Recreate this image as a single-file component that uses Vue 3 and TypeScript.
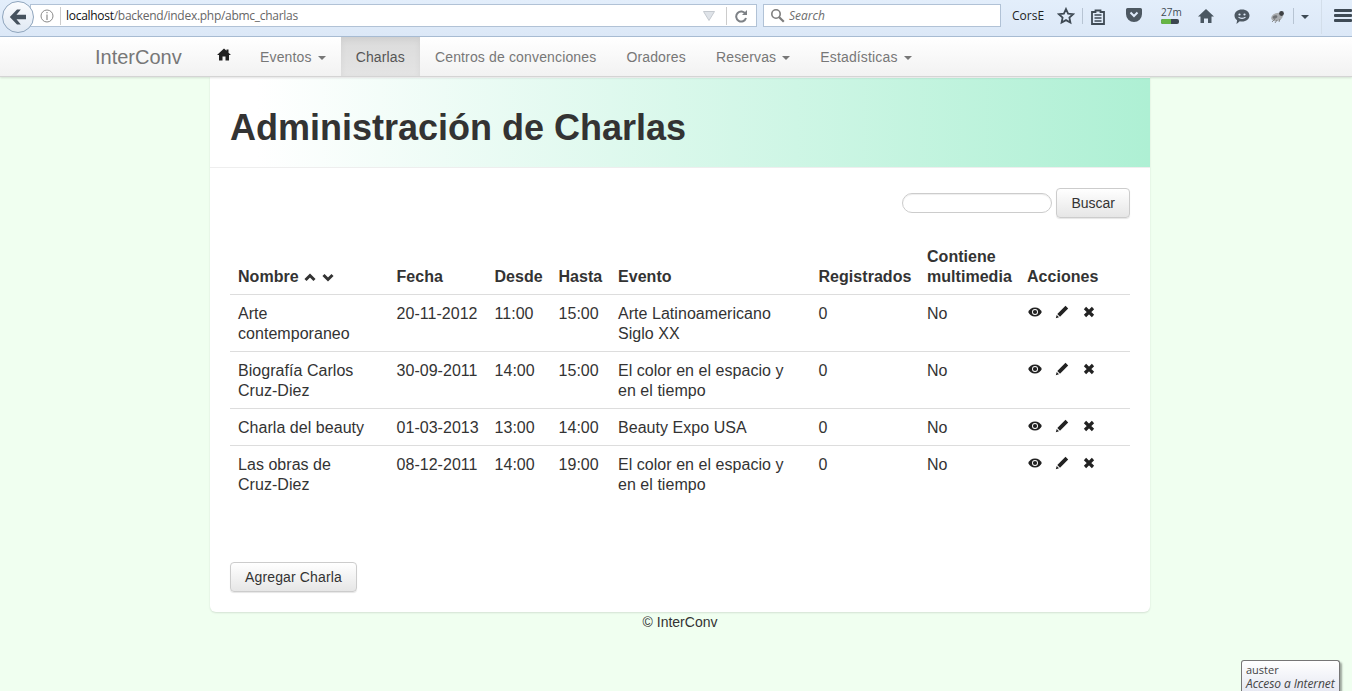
<script setup lang="ts">
interface Charla {
  nombre: string
  fecha: string
  desde: string
  hasta: string
  evento: string
}

const menu = [
  { label: 'Eventos', caret: true },
  { label: 'Charlas', active: true },
  { label: 'Centros de convenciones' },
  { label: 'Oradores' },
  { label: 'Reservas', caret: true },
  { label: 'Estadísticas', caret: true },
]

const charlas: Charla[] = [
  { nombre: 'Arte contemporaneo', fecha: '20-11-2012', desde: '11:00', hasta: '15:00', evento: 'Arte Latinoamericano Siglo XX' },
  { nombre: 'Biografía Carlos Cruz-Diez', fecha: '30-09-2011', desde: '14:00', hasta: '15:00', evento: 'El color en el espacio y en el tiempo' },
  { nombre: 'Charla del beauty', fecha: '01-03-2013', desde: '13:00', hasta: '14:00', evento: 'Beauty Expo USA' },
  { nombre: 'Las obras de Cruz-Diez', fecha: '08-12-2011', desde: '14:00', hasta: '19:00', evento: 'El color en el espacio y en el tiempo' },
]
</script>

<template>
  <div class="page">
    <!-- barra del navegador -->
    <header class="browser">
      <div class="back">
        <svg width="18" height="16" viewBox="0 0 18 16"><path d="M8 .5 .8 8 8 15.500h3.800L7.500 10.300H17V5.700H7.500L11.800 .5z" fill="#46525e" /></svg>
      </div>
      <div class="urlbar">
        <svg class="info" width="14" height="14" viewBox="0 0 14 14"><circle cx="7" cy="7" r="6" fill="none" stroke="#8a8a8a" /><path d="M6.400 3h1.200v1.300H6.400zM6.400 5.600h1.200V11H6.400z" fill="#8a8a8a" /></svg>
        <span class="sep"></span>
        <span class="url"><b>localhost</b>/backend/index.php/abmc_charlas</span>
        <svg class="drop" width="12" height="10" viewBox="0 0 12 10"><path d="M.5.5h11L6 9.500z" fill="#dfe3e8" stroke="#c4c9cf" /></svg>
        <span class="sep sep-right"></span>
        <svg class="reload" width="14" height="14" viewBox="0 0 14 14"><path d="M11.500 5A5 5 0 1 0 12 9" fill="none" stroke="#7d8186" stroke-width="2" /><path d="M8 6h5V1z" fill="#7d8186" /></svg>
      </div>
      <div class="searchbar">
        <svg width="15" height="15" viewBox="0 0 15 15"><circle cx="6" cy="6" r="4.200" fill="none" stroke="#7d7d7d" stroke-width="1.600" /><path d="m9.200 9.200 4.600 4.600" stroke="#7d7d7d" stroke-width="2.200" /></svg>
        <span>Search</span>
      </div>
      <span class="corse">CorsE</span>
      <div class="tools">
        <svg class="t-star" width="18" height="18" viewBox="0 0 18 18"><path d="m9 2 2.100 4.600 5 .6-3.700 3.400 1 5L9 13.100 4.600 15.600l1-5L1.900 7.200l5-.6z" fill="none" stroke="#3f4a54" stroke-width="1.800" /></svg>
        <span class="t-sep"></span>
        <svg class="t-clip" width="16" height="17" viewBox="0 0 16 17"><path d="M5.500 2.500h5V4H14v12H2V4h3.500z" fill="none" stroke="#3f4a54" stroke-width="1.800" /><path d="M4.500 7h7M4.500 10h7M4.500 13h7" stroke="#3f4a54" stroke-width="1.400" /></svg>
        <svg class="t-pocket" width="18" height="16" viewBox="0 0 18 16"><path d="M2.500 1h13A1.500 1.500 0 0 1 17 2.500V7A8 8 0 0 1 1 7V2.500A1.500 1.500 0 0 1 2.500 1z" fill="#4d5862" /><path d="m5.500 5.500 3.500 3.500 3.500-3.500" fill="none" stroke="#dfeafa" stroke-width="2" /></svg>
        <div class="t-timer">
          <span>27m</span>
          <i><em></em></i>
        </div>
        <svg class="t-home" width="18" height="16" viewBox="0 0 18 16"><path d="M9 1 1 8.500h2.500V15h3.500v-4.500h4V15h3.500V8.500H17z" fill="#4a5762" /></svg>
        <svg class="t-chat" width="18" height="17" viewBox="0 0 18 17"><path d="M9 1.500c4.400 0 7.500 2.600 7.500 6s-3.100 6-7.500 6c-.8 0-1.500-.1-2.200-.2L3.500 16l.6-3.700C2.500 11.200 1.500 9.500 1.500 7.500c0-3.400 3.100-6 7.500-6z" fill="#4d5862" /><circle cx="6.500" cy="6.500" r="1.100" fill="#dfeafa" /><circle cx="11.500" cy="6.500" r="1.100" fill="#dfeafa" /><path d="M5.500 9.200c1.800 1.500 5.200 1.500 7 0" fill="none" stroke="#dfeafa" stroke-width="1.100" /></svg>
        <svg class="t-bug" width="16" height="14" viewBox="0 0 16 14"><ellipse cx="7" cy="8" rx="6" ry="4" transform="rotate(-20 7 8)" fill="#a9acaf" /><ellipse cx="5" cy="8" rx="2.500" ry="1.500" transform="rotate(-20 5 8)" fill="#6e7175" /><circle cx="11.500" cy="4.500" r="2.400" fill="#3e4144" /><path d="M2 13 5 10M5 14l2-3M9 13l1-3" stroke="#777" stroke-width=".8" /></svg>
        <span class="t-sep t-sep-bug"></span>
        <span class="t-caret"></span>
        <span class="t-sep t-sep-menu"></span>
        <div class="t-burger"><i></i><i></i><i></i></div>
      </div>
    </header>

    <!-- menu principal -->
    <nav class="navbar">
      <span class="brand">InterConv</span>
      <a class="nav-home">
        <svg width="14" height="13" viewBox="0 0 14 13"><path d="M7 .5 0 7h2v5.500h3.500V8.500h3v4H12V7h2L11.500 4.700V1.500h-2v1.300z" fill="#222" /></svg>
      </a>
      <a v-for="item in menu" :key="item.label" class="nav-item" :class="{ active: item.active }">
        {{ item.label }}<span v-if="item.caret" class="caret"></span>
      </a>
    </nav>

    <main class="panel">
      <div class="panel-head">
        <h1>Administración de Charlas</h1>
      </div>
      <div class="panel-body">
        <form class="search" @submit.prevent>
          <input type="text" />
          <button class="btn">Buscar</button>
        </form>

        <table class="grid">
          <colgroup>
            <col class="c1" /><col class="c2" /><col class="c3" /><col class="c4" />
            <col class="c5" /><col class="c6" /><col class="c7" /><col class="c8" />
          </colgroup>
          <thead>
            <tr>
              <th>
                Nombre
                <svg class="sort" width="12" height="9" viewBox="0 0 12 9"><path d="m1.500 7 4.500-4.500L10.500 7" fill="none" stroke="#333" stroke-width="3" /></svg>
                <svg class="sort sort-down" width="12" height="9" viewBox="0 0 12 9"><path d="m1.500 2 4.500 4.500L10.500 2" fill="none" stroke="#333" stroke-width="3" /></svg>
              </th>
              <th>Fecha</th>
              <th>Desde</th>
              <th>Hasta</th>
              <th>Evento</th>
              <th>Registrados</th>
              <th>Contiene multimedia</th>
              <th>Acciones</th>
            </tr>
          </thead>
          <tbody>
            <tr v-for="c in charlas" :key="c.nombre">
              <td class="nombre">{{ c.nombre }}</td>
              <td class="fecha">{{ c.fecha }}</td>
              <td>{{ c.desde }}</td>
              <td>{{ c.hasta }}</td>
              <td>{{ c.evento }}</td>
              <td>0</td>
              <td>No</td>
              <td>
                <div class="actions">
                  <svg width="14" height="10" viewBox="0 0 14 10"><path d="M7 .5C3.800.5 1.300 2.500.2 5 1.300 7.500 3.800 9.500 7 9.500s5.700-2 6.800-4.500C12.700 2.500 10.200.5 7 .5z" fill="#222" /><circle cx="7" cy="5" r="3" fill="#fff" /><circle cx="7" cy="5" r="2.100" fill="#222" /></svg>
                  <svg width="14" height="14" viewBox="0 0 14 14"><path d="M10.500.8 13.200 3.500 5 11.700 2.300 9zM1.700 10 4 12.300.8 13.200z" fill="#222" /></svg>
                  <svg class="remove" width="12" height="12" viewBox="0 0 12 12"><path d="m2 2 8 8M10 2l-8 8" stroke="#222" stroke-width="3.200" /></svg>
                </div>
              </td>
            </tr>
          </tbody>
        </table>

        <button class="btn add">Agregar Charla</button>
      </div>
    </main>

    <footer class="foot">© InterConv</footer>

    <div class="tip">
      <div>auster</div>
      <div class="tip-sub">Acceso a Internet</div>
    </div>
  </div>
</template>

<style>
html,
body {
  margin: 0;
  height: 100%;
  overflow: hidden;
  background: #f0fff0;
}
</style>

<style scoped>
.page {
  position: relative;
  height: 691px;
  overflow: hidden;
  background: #f0fff0;
  font-family: "Liberation Sans", Arial, sans-serif;
  font-size: 16px;
  line-height: 20px;
  color: #333;
}

/* barra del navegador */
.browser {
  height: 36px;
  display: flex;
  align-items: flex-start;
  background: linear-gradient(#e3eefb, #dce8f7);
  border-bottom: 1px solid #a9bdd4;
  font-family: "Open Sans", "Noto Sans", sans-serif;
  position: relative;
}

.back {
  width: 30px;
  height: 30px;
  margin: 1px 0 0 2px;
  flex: none;
  display: flex;
  align-items: center;
  justify-content: center;
  border: 1px solid #8fa5bd;
  border-radius: 50%;
  background: linear-gradient(#fbfcfe, #dfe8f3);
  position: relative;
  z-index: 1;
}

.urlbar {
  width: 727px;
  height: 23px;
  margin: 4px 0 0 -4px;
  padding-left: 8px;
  box-sizing: border-box;
  flex: none;
  display: flex;
  align-items: center;
  background: #fff;
  border: 1px solid #b1c2d6;
}

.info {
  margin-left: 1px;
  flex: none;
}

.sep {
  width: 1px;
  height: 18px;
  background: #ccc;
  margin: 0 5px 0 6px;
  flex: none;
}

.url {
  font-size: 12px;
  color: #666;
  white-space: nowrap;
  letter-spacing: -0.28px;
  flex: 1;
}

.url b {
  font-weight: 400;
  color: #111;
}

.drop {
  flex: none;
  margin-right: 11px;
}

.sep-right {
  margin: 0 7px 0 0;
}

.reload {
  flex: none;
  margin-right: 8px;
}

.searchbar {
  width: 238px;
  height: 23px;
  margin: 4px 0 0 6px;
  padding-left: 6px;
  box-sizing: border-box;
  flex: none;
  display: flex;
  align-items: center;
  gap: 4px;
  background: #fff;
  border: 1px solid #b1c2d6;
  font-size: 12px;
  font-style: italic;
  color: #6d6d6d;
}

.corse {
  margin: 8px 0 0 11px;
  font-size: 12px;
  line-height: 16px;
  color: #222;
  flex: none;
}

.tools {
  flex: 1;
  height: 36px;
  position: relative;
}

.tools > * {
  position: absolute;
}

.t-star { left: 13px; top: 7px; }
.t-sep { width: 1px; height: 16px; background: #b7c4d3; top: 8px; left: 38px; }
.t-clip { left: 46px; top: 8px; }
.t-pocket { left: 81px; top: 7px; }
.t-home { left: 153px; top: 8px; }
.t-chat { left: 189px; top: 8px; }
.t-bug { left: 226px; top: 9px; }
.t-sep-bug { left: 249px; }
.t-caret {
  left: 257px;
  top: 15px;
  border: 4px solid transparent;
  border-top-color: #3e4a55;
  border-bottom: 0;
}
.t-sep-menu { left: 277px; height: 34px; top: 0; background: #d3deea; }

.t-timer {
  left: 117px;
  top: 7px;
  width: 18px;
  font-size: 10px;
  line-height: 11px;
  color: #3f4a54;
  text-align: center;
}

.t-timer i {
  display: block;
  height: 5px;
  margin-top: 1px;
  border-radius: 2px;
  background: #3c4650;
  overflow: hidden;
}

.t-timer em {
  display: block;
  width: 10px;
  height: 5px;
  background: #66b545;
}

.t-burger {
  left: 290px;
  top: 9px;
  width: 18px;
  display: flex;
  flex-direction: column;
  gap: 2px;
}

.t-burger i {
  height: 3px;
  background: #3e4a55;
  border-radius: 1px;
}

/* menu principal */
.navbar {
  height: 39px;
  padding-left: 95px;
  display: flex;
  align-items: stretch;
  background: linear-gradient(#fff, #f2f2f2);
  border-bottom: 1px solid #d4d4d4;
  box-shadow: 0 1px 2px rgba(0, 0, 0, 0.12);
  position: relative;
  z-index: 2;
}

.brand {
  width: 107px;
  font-size: 20px;
  line-height: 40px;
  color: #777;
  flex: none;
}

.nav-home {
  width: 43px;
  padding: 11px 0 0 15px;
  box-sizing: border-box;
  flex: none;
}

.nav-home svg {
  display: block;
}

.nav-item {
  padding: 0 15px;
  font-size: 14px;
  line-height: 40px;
  color: #777;
  letter-spacing: 0.15px;
  white-space: nowrap;
}

.nav-item.active {
  color: #555;
  background: linear-gradient(#dbdbdb, #e4e4e4);
  box-shadow: inset 0 3px 6px rgba(0, 0, 0, 0.06);
}

.caret {
  display: inline-block;
  margin-left: 6px;
  vertical-align: middle;
  border-top: 4px solid #777;
  border-left: 4px solid transparent;
  border-right: 4px solid transparent;
}

/* panel */
.panel {
  width: 940px;
  height: 535px;
  margin-left: 210px;
  background: #fff;
  border-radius: 0 0 6px 6px;
  box-shadow: 0 1px 2px rgba(0, 0, 0, 0.12);
  display: flex;
  flex-direction: column;
}

.panel-head {
  height: 90px;
  margin-top: 1px;
  padding: 10px 0 0 20px;
  box-sizing: border-box;
  flex: none;
  display: flex;
  align-items: center;
  background: linear-gradient(to right, #fff 5%, #aef0d4 100%);
  border-bottom: 1px solid #eee;
}

h1 {
  margin: 0;
  font-size: 36px;
  line-height: 40px;
  color: #333;
  font-weight: 700;
}

.panel-body {
  flex: 1;
  padding: 20px;
  display: flex;
  flex-direction: column;
}

.search {
  display: flex;
  justify-content: flex-end;
  align-items: center;
  gap: 4px;
  margin: 0;
}

.search input {
  width: 150px;
  height: 20px;
  padding: 0 10px;
  box-sizing: border-box;
  background: #fff;
  border: 1px solid #ccc;
  border-radius: 10px;
  box-shadow: inset 0 1px 1px rgba(0, 0, 0, 0.07);
}

.btn {
  height: 30px;
  padding: 0 14px;
  background: linear-gradient(#fff, #e6e6e6);
  border: 1px solid #ccc;
  border-radius: 4px;
  box-shadow: 0 1px 1px rgba(0, 0, 0, 0.1);
  font-family: inherit;
  font-size: 14px;
  color: #333;
}

.grid {
  width: 900px;
  margin-top: 21px;
  table-layout: fixed;
  border-collapse: collapse;
  letter-spacing: 0.04px;
}

.c1 { width: 158.5px; }
.c2 { width: 98px; }
.c3 { width: 64px; }
.c4 { width: 59.5px; }
.c5 { width: 200.5px; }
.c6 { width: 108.5px; }
.c7 { width: 100px; }
.c8 { width: 111px; }

th,
td {
  text-align: left;
}

th {
  padding: 8px 8px 7px;
  vertical-align: bottom;
  font-weight: 700;
  color: #333;
  border-bottom: 1px solid #ddd;
}

td {
  padding: 9px 8px 7px;
  vertical-align: top;
  border-top: 1px solid #ddd;
}

tbody tr:first-child td {
  border-top: 0;
}

td.nombre {
  padding-right: 22px;
}

td.fecha {
  white-space: nowrap;
}

.sort {
  margin-left: 1px;
}

.sort-down {
  margin-left: 6px;
}

.actions {
  display: flex;
  align-items: center;
  gap: 13px;
  height: 16px;
  padding-left: 1px;
}

.remove {
  margin-left: 1px;
}

.add {
  align-self: flex-start;
  margin-top: 60px;
  letter-spacing: 0.14px;
}

.foot {
  width: 940px;
  margin-left: 210px;
  text-align: center;
  font-size: 14px;
}

.tip {
  position: absolute;
  left: 1241px;
  top: 660px;
  width: 93px;
  height: 30px;
  padding: 1px 0 0 4px;
  background: linear-gradient(#fff, #e6e8f2);
  border: 1px solid #767676;
  border-bottom: 0;
  border-radius: 3px 3px 0 0;
  box-shadow: 2px 2px 2px rgba(0, 0, 0, 0.35);
  font-family: "Open Sans", "Noto Sans", sans-serif;
  font-size: 11px;
  line-height: 15px;
  color: #444;
}

.tip-sub {
  font-size: 12px;
  line-height: 14px;
  letter-spacing: -0.1px;
  font-style: italic;
}
</style>
